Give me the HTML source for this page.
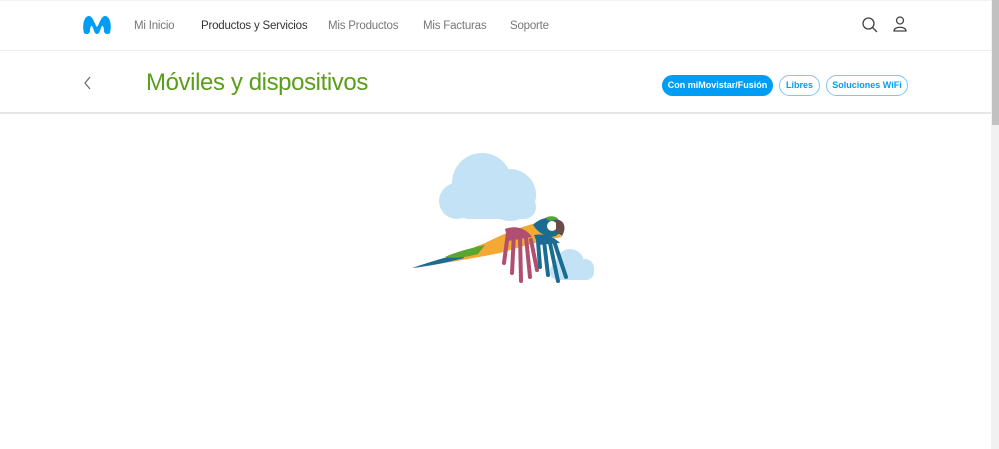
<!DOCTYPE html><html><head><meta charset="utf-8"><style>
body{margin:0;width:999px;height:449px;overflow:hidden;background:#fff;font-family:"Liberation Sans",sans-serif;position:relative}
.hdr{position:absolute;left:0;top:0;width:991px;height:51px;border-bottom:1px solid #eee;border-top:1px solid #f2f2f2;box-sizing:border-box}
.nav{position:absolute;top:20px;font-size:11.5px;color:#777;letter-spacing:-0.2px}
.sub{position:absolute;left:0;top:52px;width:991px;height:62px;border-bottom:2px solid #e6e6e6;box-sizing:border-box}
h1{position:absolute;left:146px;top:69px;margin:0;font-weight:normal;font-size:24px;color:#5a9e1a;letter-spacing:-0.4px}
.pill{position:absolute;top:75px;height:21px;border-radius:11px;font-size:9px;font-weight:bold;line-height:21px;text-align:center;box-sizing:border-box;white-space:nowrap}
.sb{position:absolute;right:0;top:0;width:8px;height:449px;background:#f1f1f1}
.sb div{position:absolute;left:1px;top:0;width:7px;height:125px;background:#c1c1c1}
</style></head><body>
<div class="hdr"></div>
<svg style="position:absolute;left:82px;top:14px" width="30" height="22" viewBox="0 0 30 22"><path d="M2 19 C0 11 2 2 7 2 C11 2 13 11 15 13 C17 11 19 2 23 2 C28 2 30 11 28 19 C26 21 22 20 22 17 C22 14 21 11 20 12 C18 15 18 20 15 20 C12 20 12 15 10 12 C9 11 8 14 8 17 C8 20 4 21 2 19Z" fill="#019df4"/></svg>
<div class="nav" style="left:134px">Mi Inicio</div>
<div class="nav" style="left:201px;color:#333">Productos y Servicios</div>
<div class="nav" style="left:328px">Mis Productos</div>
<div class="nav" style="left:423px">Mis Facturas</div>
<div class="nav" style="left:510px">Soporte</div>
<svg style="position:absolute;left:861px;top:16px" width="18" height="18" viewBox="0 0 18 18" fill="none" stroke="#444" stroke-width="1.3"><circle cx="7.5" cy="7.5" r="5.5"/><path d="M11.5 11.5 L16 16"/></svg>
<svg style="position:absolute;left:892px;top:15px" width="16" height="18" viewBox="0 0 16 18" fill="none" stroke="#444" stroke-width="1.3"><circle cx="8" cy="5.5" r="3.5"/><path d="M2 16 C2 11 14 11 14 16 Z"/></svg>
<div class="sub"></div>
<svg style="position:absolute;left:83px;top:76px" width="10" height="14" viewBox="0 0 10 14" fill="none" stroke="#666" stroke-width="1.2"><path d="M7 1 L2 7 L7 13"/></svg>
<h1>Móviles y dispositivos</h1>
<div class="pill" style="left:662px;width:111px;background:#019df4;color:#fff">Con miMovistar/Fusión</div>
<div class="pill" style="left:779px;width:41px;border:1px solid #7cc6f5;color:#019df4;line-height:19px">Libres</div>
<div class="pill" style="left:826px;width:82px;border:1px solid #7cc6f5;color:#019df4;line-height:19px">Soluciones WiFi</div>
<svg style="position:absolute;left:400px;top:145px" width="210" height="145" viewBox="0 0 210 145">
<g fill="#c3e2f5"><circle cx="82" cy="38" r="30"/><circle cx="110" cy="50" r="26"/><circle cx="57" cy="56" r="18"/><rect x="57" y="50" width="79" height="24" rx="12"/>
<circle cx="170" cy="118" r="14"/><circle cx="185" cy="123" r="9"/><rect x="150" y="118" width="44" height="17" rx="8"/></g>
<path d="M12 123 C40 115 60 108 85 98 C105 88 125 80 145 76 L162 92 C140 96 120 102 100 108 C75 113 40 119 12 123Z" fill="#f4a934"/>
<path d="M12 123 C30 117 45 112 62 109 L64 113 C45 118 30 121 12 123Z" fill="#1a6c93"/>
<path d="M45 112 C58 106 72 103 85 100 L78 109 C67 112 56 114 45 112Z" fill="#5aa52f"/>
<path d="M133 80 C140 72 155 70 160 76 C163 84 160 92 150 92 C142 90 137 86 133 80Z" fill="#1a6c93"/>
<path d="M145 73 C150 70 156 71 158 74 L150 76Z" fill="#5aa52f"/>
<circle cx="152" cy="81" r="5" fill="#fff"/><path d="M156 75 C164 74 167 83 162 91 L156 87Z" fill="#6b4a4a"/>
<g stroke="#b04f6f" stroke-width="4" stroke-linecap="round" fill="none"><path d="M108 88 L104 118"/><path d="M114 88 L112 128"/><path d="M120 90 L121 136"/><path d="M126 92 L130 132"/><path d="M131 95 L137 125"/></g>
<path d="M105 84 C115 80 126 83 132 92 L108 96Z" fill="#b04f6f"/>
<g stroke="#1a6c93" stroke-width="4" stroke-linecap="round" fill="none"><path d="M138 96 L140 122"/><path d="M144 96 L148 130"/><path d="M150 98 L158 136"/><path d="M154 96 L166 132"/></g>
<path d="M134 90 C144 88 154 92 160 98 L138 100Z" fill="#1a6c93"/>
</svg>
<div class="sb"><div></div></div>
</body></html>
